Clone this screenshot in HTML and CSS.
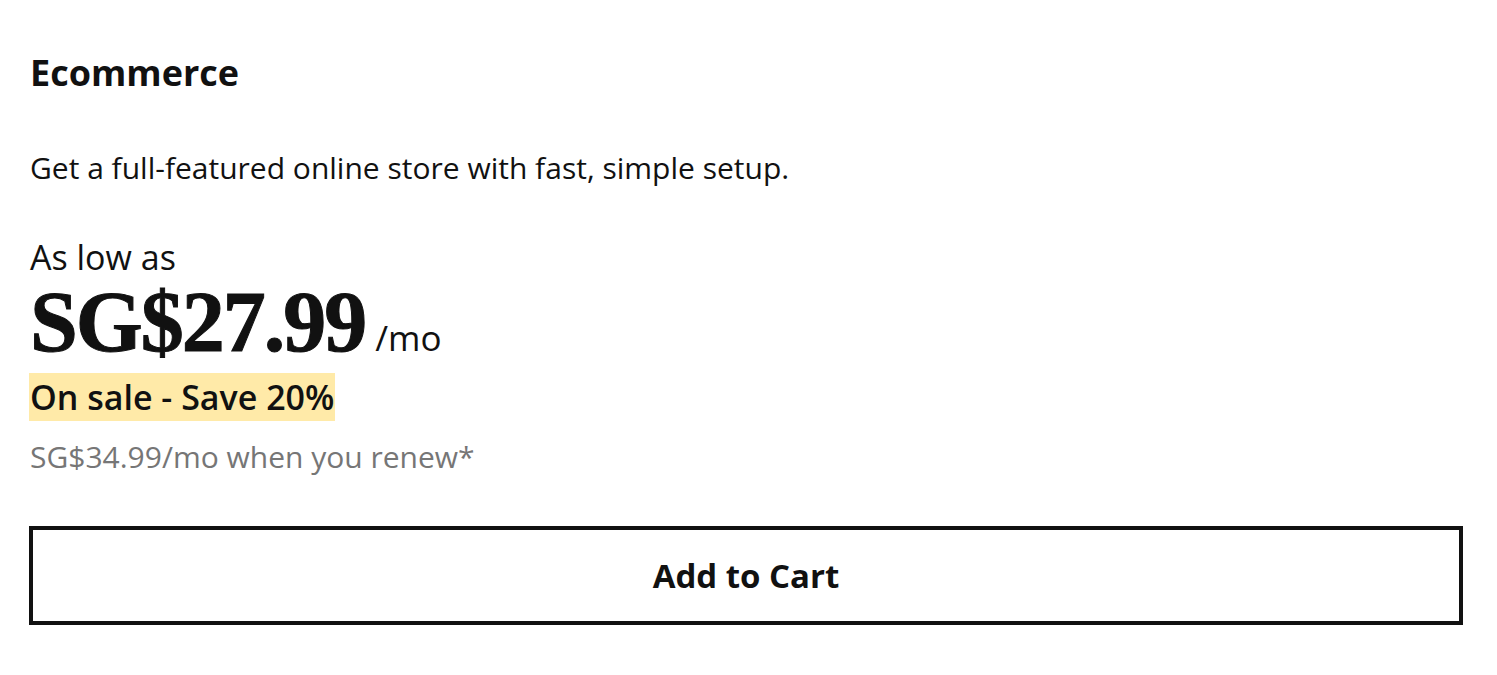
FILE: index.html
```html
<!DOCTYPE html>
<html lang="en">
<head>
  <meta charset="UTF-8">
  <meta name="viewport" content="width=device-width, initial-scale=1.0">
  <title>Ecommerce</title>
  <link rel="stylesheet" href="styles.css">
</head>
<body>
  <div class="plan-card">
    <h2 class="plan-title">Ecommerce</h2>
    <p class="plan-desc">Get a full-featured online store with fast, simple setup.</p>

    <!-- Pricing -->
    <div class="price-block">
      <div class="price-label">As low as</div>
      <div class="price-row">
        <span class="price">SG$27.99</span>
        <span class="price-term">/mo</span>
      </div>
      <div class="sale"><span class="sale-tag">On sale - Save 20%</span></div>
      <div class="renew">SG$34.99/mo when you renew*</div>
    </div>

    <button class="cart-btn">Add to Cart</button>
  </div>
</body>
</html>
```

FILE: styles.css
```css
body {
  margin: 0;
  background: #fff;
  color: #111;
  font-family: "Open Sans", Arial, sans-serif;
}

.plan-card {
  padding: 50px 34px 0 30px;
}

.plan-title {
  margin: 0;
  font-size: 36px;
  font-weight: 700;
  line-height: 46px;
}

.plan-desc {
  margin: 52px 0 0;
  font-size: 30px;
  line-height: 40px;
}

.price-block {
  margin-top: 49px;
}

.price-label {
  font-size: 34px;
  line-height: 40px;
}

.price-row {
  display: flex;
  align-items: baseline;
  gap: 10px;
  margin-top: 2px;
}

.price {
  font-family: "Liberation Serif", "Times New Roman", serif;
  font-weight: 700;
  font-size: 86px;
  line-height: 86px;
  letter-spacing: -2px;
  -webkit-text-stroke: 1px #111;
}

.price-term {
  font-size: 35px;
}

.sale {
  margin-top: 8px;
}

.sale-tag {
  display: inline-block;
  background: #ffeaa8;
  font-size: 34px;
  font-weight: 600;
  line-height: 48px;
  margin-left: -1px;
  padding: 0 1px;
}

.renew {
  color: #767676;
  font-size: 30px;
  line-height: 40px;
  margin-top: 16px;
}

.cart-btn {
  display: block;
  width: calc(100% + 1px);
  height: 99px;
  margin-top: 49px;
  margin-left: -1px;
  background: #fff;
  border: 4px solid #111;
  color: #111;
  font-family: inherit;
  font-size: 33px;
  font-weight: 700;
  cursor: pointer;
}
```
